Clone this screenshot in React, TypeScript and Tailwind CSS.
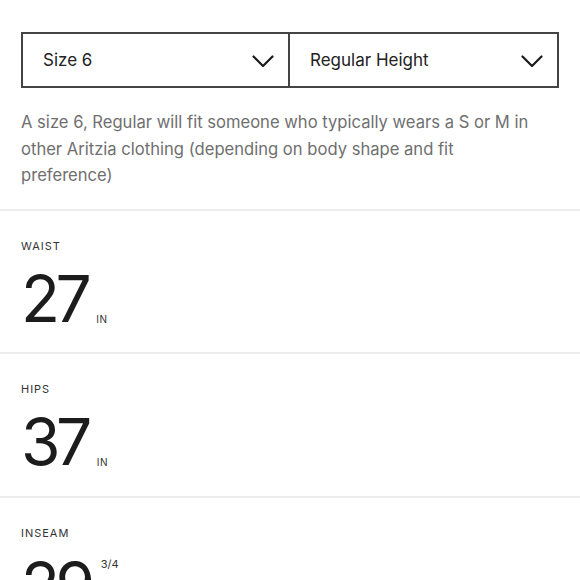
import React from "react";

function Chevron() {
  return (
    <svg width="22" height="13" viewBox="0 0 22 13" fill="none">
      <path d="M1.5 1.5 L11 11 L20.5 1.5" stroke="#1a1a1a" strokeWidth="2.2" strokeLinecap="round" strokeLinejoin="round" />
    </svg>
  );
}

function Measure({ label, value, frac }: { label: string; value: string; frac?: string }) {
  return (
    <div className="border-t-2 border-[#ececec] px-[21px] pt-[27px] pb-[20.5px]">
      <div className="text-[11px] leading-[16px] tracking-[0.09em] text-[#333]">{label}</div>
      <div className="mt-[12px] flex items-baseline">
        <span className="text-[64px] leading-[66px] text-[#1c1c1c] tracking-[-0.07em]">{value}</span>
        <span className="relative ml-[9px] top-[1px] text-[10px] tracking-[0.06em] text-[#333]">
          {frac && <span className="absolute left-[1px] top-[-43px] text-[11px] tracking-normal">{frac}</span>}
          IN
        </span>
      </div>
    </div>
  );
}

export default function App() {
  return (
    <div className="w-[580px] h-[580px] overflow-hidden bg-white" style={{ fontFamily: "Inter, 'Noto Sans', sans-serif" }}>
      <div className="px-[21px] pt-[32px]">
        <div className="grid grid-cols-2 h-[56px] border-2 border-[#444]">
          <div className="flex items-center justify-between pl-[20px] pr-[14px] pt-[2px] border-r-2 border-[#444]">
            <span className="text-[17px] text-[#222]">Size 6</span>
            <Chevron />
          </div>
          <div className="flex items-center justify-between pl-[20px] pr-[14px] pt-[2px]">
            <span className="text-[17px] text-[#222]">Regular Height</span>
            <Chevron />
          </div>
        </div>
        <p className="mt-[21px] pb-[20px] w-[515px] text-[16.6px] leading-[26.5px] text-[#6f6f6f]">
          A size 6, Regular will fit someone who typically wears a S or M in other Aritzia clothing (depending on body shape and fit preference)
        </p>
      </div>
      <Measure label="WAIST" value="27" />
      <Measure label="HIPS" value="37" />
      <Measure label="INSEAM" value="29" frac="3/4" />
    </div>
  );
}
